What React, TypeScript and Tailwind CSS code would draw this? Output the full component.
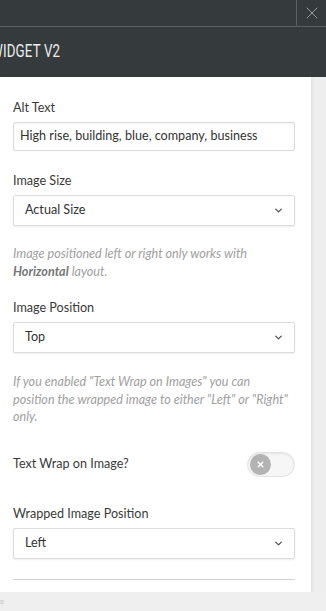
import { ChevronDown, X } from 'lucide-react';

const font = { fontFamily: '"Lato", "Open Sans", sans-serif' };

function Label({ children }: { children: React.ReactNode }) {
  return <label className="block text-[12.6px] leading-5 text-[#3a3a3a]">{children}</label>;
}

function Select({ value }: { value: string }) {
  return (
    <div className="mt-1 flex h-[31px] items-center justify-between rounded-[2px] border border-[#dcdcdc] bg-white pl-[11px] pr-[10px] text-[12.6px] text-[#333] shadow-[0_1px_2px_rgba(0,0,0,0.08)]">
      <span>{value}</span>
      <ChevronDown className="h-[11px] w-[11px] text-[#555]" strokeWidth={3} />
    </div>
  );
}

function Help({ children }: { children: React.ReactNode }) {
  return <p className="whitespace-nowrap text-[12.6px] italic leading-[17.5px] text-[#a0a0a0]">{children}</p>;
}

export default function App() {
  return (
    <div className="flex h-[611px] w-[326px] flex-col overflow-hidden bg-[#eeeeee]" style={font}>
      {/* Top bar */}
      <div className="flex h-[27px] shrink-0 border-b border-[#5b6264] bg-[#353b3d]">
        <div className="flex-1" />
        <div className="flex w-[30px] items-center justify-center border-l border-[#5b6264]">
          <X className="h-[20px] w-[20px] text-[#a9aeb0]" strokeWidth={1} />
        </div>
      </div>

      {/* Title bar */}
      <div className="flex h-[50px] shrink-0 items-center bg-[#353b3d]">
        <span
          className="ml-[-9px] origin-left scale-x-[0.72] text-[18.5px] tracking-[0.2px] text-[#ececec]"
          style={{ fontFamily: 'Roboto, sans-serif' }}
        >
          WIDGET V2
        </span>
      </div>

      <div className="flex flex-1">
        {/* Panel */}
        <div className="flex w-[311px] shrink-0 flex-col bg-white pl-[13px] pr-[16px] pt-[21px] shadow-[1px_0_3px_rgba(0,0,0,0.08)]">
          <Label>Alt Text</Label>
          <div className="mt-1 flex h-[29px] items-center rounded-[2px] border border-[#dcdcdc] pl-[6px] text-[12.6px] text-[#333] shadow-[inset_0_1px_2px_rgba(0,0,0,0.06)]">
            High rise, building, blue, company, business
          </div>

          <div className="mt-5">
            <Label>Image Size</Label>
            <Select value="Actual Size" />
          </div>

          <div className="mt-[19px]">
            <Help>
              Image positioned left or right only works with
              <br />
              <b className="font-bold text-[#777]">Horizontal</b> layout.
            </Help>
          </div>

          <div className="mt-[18px]">
            <Label>Image Position</Label>
            <Select value="Top" />
          </div>

          <div className="mt-[20px]">
            <Help>
              If you enabled "Text Wrap on Images" you can
              <br />
              position the wrapped image to either "Left" or "Right"
              <br />
              only.
            </Help>
          </div>

          <div className="mt-[26px] flex items-center justify-between">
            <Label>Text Wrap on Image?</Label>
            <div className="flex h-[25px] w-[48px] items-center rounded-full border border-[#e2e2e2] bg-[#f6f6f6] px-[2px] shadow-[inset_0_1px_2px_rgba(0,0,0,0.08)]">
              <div className="flex h-[21px] w-[21px] items-center justify-center rounded-full bg-[#b3b3b3]">
                <X className="h-[9px] w-[9px] text-white" strokeWidth={4} />
              </div>
            </div>
          </div>

          <div className="mt-[27px]">
            <Label>Wrapped Image Position</Label>
            <Select value="Left" />
          </div>

          <div className="mt-[20px] h-px bg-[#cfd3d3]" />
        </div>
        <div className="flex-1" />
      </div>

      {/* Bottom bar */}
      <div className="flex h-[19px] shrink-0 items-center bg-[#efefef]">
        <span className="ml-[-1px] text-[9px] leading-none text-[#bbb]">≡</span>
      </div>
    </div>
  );
}
